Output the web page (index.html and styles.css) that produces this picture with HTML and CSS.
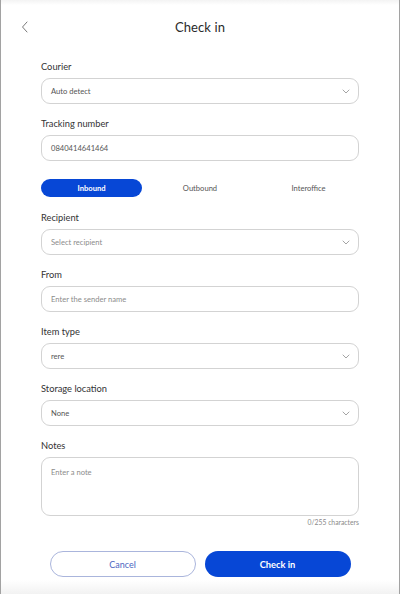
FILE: index.html
```html
<!DOCTYPE html>
<html>
<head>
<meta charset="utf-8">
<link rel="stylesheet" href="styles.css">
</head>
<body>
<div class="frame">
  <div class="topshade"></div>
  <header class="header">
    <span class="back">
      <svg width="8" height="12" viewBox="0 0 8 12"><path d="M6 1 L1.5 6 L6 11" fill="none" stroke="#7a7a7a" stroke-width="1" stroke-linecap="round" stroke-linejoin="round"/></svg>
    </span>
    <h1 class="title">Check in</h1>
  </header>
  <main class="form">
    <div class="group">
      <div class="label">Courier</div>
      <div class="field select"><span class="value">Auto detect</span><svg class="chev" width="8" height="5" viewBox="0 0 8 5"><path d="M1 1 L4 4 L7 1" fill="none" stroke="#9a9a9a" stroke-width="0.9" stroke-linecap="round" stroke-linejoin="round"/></svg></div>
    </div>
    <div class="group">
      <div class="label">Tracking number</div>
      <div class="field"><span class="value">0840414641464</span></div>
    </div>
    <div class="tabs">
      <div class="tab active">Inbound</div>
      <div class="tab">Outbound</div>
      <div class="tab">Interoffice</div>
    </div>
    <div class="group">
      <div class="label">Recipient</div>
      <div class="field select"><span class="placeholder">Select recipient</span><svg class="chev" width="8" height="5" viewBox="0 0 8 5"><path d="M1 1 L4 4 L7 1" fill="none" stroke="#9a9a9a" stroke-width="0.9" stroke-linecap="round" stroke-linejoin="round"/></svg></div>
    </div>
    <div class="group">
      <div class="label">From</div>
      <div class="field"><span class="placeholder">Enter the sender name</span></div>
    </div>
    <div class="group">
      <div class="label">Item type</div>
      <div class="field select"><span class="value">rere</span><svg class="chev" width="8" height="5" viewBox="0 0 8 5"><path d="M1 1 L4 4 L7 1" fill="none" stroke="#9a9a9a" stroke-width="0.9" stroke-linecap="round" stroke-linejoin="round"/></svg></div>
    </div>
    <div class="group">
      <div class="label">Storage location</div>
      <div class="field select"><span class="value">None</span><svg class="chev" width="8" height="5" viewBox="0 0 8 5"><path d="M1 1 L4 4 L7 1" fill="none" stroke="#9a9a9a" stroke-width="0.9" stroke-linecap="round" stroke-linejoin="round"/></svg></div>
    </div>
    <div class="group">
      <div class="label">Notes</div>
      <div class="field textarea"><span class="placeholder">Enter a note</span></div>
      <div class="counter">0/255 characters</div>
    </div>
    <div class="actions">
      <div class="btn cancel">Cancel</div>
      <div class="btn primary">Check in</div>
    </div>
  </main>
  <div class="bottomshade"></div>
</div>
</body>
</html>
```
FILE: styles.css
```css
* { box-sizing: border-box; }
html, body { margin: 0; padding: 0; background: #ffffff; }
body { font-family: "Lato", "Noto Sans", sans-serif; color: #2f2f2f; }

.frame {
  width: 400px;
  height: 594px;
  border-left: 1px solid #a2a2a2;
  border-right: 1px solid #a2a2a2;
  background: #ffffff;
  display: flex;
  flex-direction: column;
  position: relative;
  overflow: hidden;
}

.topshade {
  position: absolute;
  left: 0; right: 0; top: 0;
  height: 5px;
  background: linear-gradient(#f3f3f3, rgba(255,255,255,0));
}

.header {
  height: 54px;
  display: flex;
  align-items: center;
  justify-content: center;
  position: relative;
}
.back {
  position: absolute;
  left: 20px;
  top: 21px;
  display: flex;
}
.title {
  margin: 0;
  font-size: 13px;
  font-weight: 400;
  color: #2a2a2a;
  letter-spacing: 0.1px;
}

.form {
  padding: 7px 40px 0 40px;
  display: flex;
  flex-direction: column;
  flex: 1;
}

.group { display: flex; flex-direction: column; margin-bottom: 14px; }
.label {
  font-size: 9.3px;
  line-height: 12px;
  height: 12px;
  color: #333333;
  margin-bottom: 5px;
}
.field {
  height: 26px;
  border: 1px solid #d3d3d3;
  border-radius: 9px;
  display: flex;
  align-items: center;
  padding: 0 8px 0 9px;
  font-size: 7.6px;
}
.field .value { color: #555555; flex: 1; }
.field .placeholder { color: #8c8c8c; flex: 1; }
.chev { flex: none; }
.textarea {
  height: 59px;
  align-items: flex-start;
  padding-top: 9px;
}
.counter {
  margin-top: 2px;
  text-align: right;
  font-size: 6.8px;
  color: #8a8a8a;
  line-height: 8px;
}

.tabs {
  display: grid;
  grid-template-columns: 1fr 1fr 1fr;
  column-gap: 7.5px;
  margin-top: 4px;
  margin-bottom: 15px;
}
.tab {
  height: 18px;
  border-radius: 9px;
  display: flex;
  align-items: center;
  justify-content: center;
  font-size: 7.6px;
  color: #555555;
}
.tab.active {
  background: #0747d6;
  color: #ffffff;
  font-weight: 700;
}

.actions {
  display: flex;
  justify-content: center;
  gap: 9px;
  margin-top: 11px;
}
.btn {
  width: 146px;
  height: 26px;
  border-radius: 13px;
  display: flex;
  align-items: center;
  justify-content: center;
  font-size: 9px;
}
.btn.cancel {
  border: 1px solid #aab5dc;
  color: #4d66bf;
}
.btn.primary {
  background: #0747d6;
  color: #ffffff;
  font-weight: 700;
  font-size: 9.3px;
}

.bottomshade {
  height: 14px;
  background: linear-gradient(#ffffff, #f2f2f2);
}
```
